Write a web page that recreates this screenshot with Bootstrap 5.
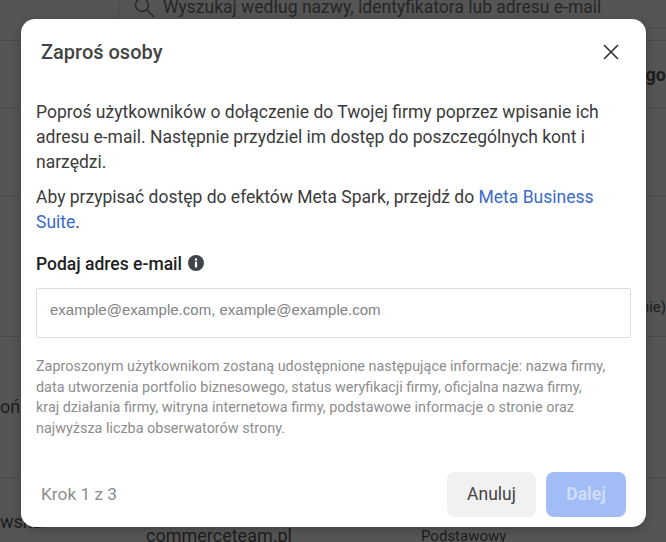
<!DOCTYPE html>
<html lang="pl"><head><meta charset="utf-8"><title>Zaproś osoby</title>
<link href="https://cdn.jsdelivr.net/npm/bootstrap@5.3.0/dist/css/bootstrap.min.css" rel="stylesheet">
<style>
html,body{height:542px;overflow:hidden}
body{background:#555;font-family:Roboto,sans-serif;color:#1c1e21;position:relative}
.bg-top{height:40px}
.bg-search{margin-left:118px;height:29px;border-left:1px solid #4a4a4a;border-bottom:1px solid #4a4a4a;padding-left:13px;gap:7px;font-size:17.5px;color:#262626;line-height:20px;align-items:flex-start;overflow:hidden}
.bg-search svg{margin-top:-3px;flex:none}
.bg-search span{margin-top:-3px}
.bg-row{border-top:1px solid #4a4a4a;font-size:18px;color:#1d1d1d}
.r1{height:68px;text-align:right;font-weight:700;padding-top:20px}
.r2{height:87px}.r3{height:141px;text-align:right;padding-top:100px;font-size:15px}
.r4{height:141px;padding-top:56px}
.r5{height:65px}
.cell-a{width:146px;padding-top:30px}.cell-b{width:275px;padding-top:44px}
.cell-c{font-size:15px;padding-top:47px}
.invite{position:absolute;left:21px;top:19px;width:625px;height:508px;background:#fff;border-radius:14px;box-shadow:0 2px 10px rgba(0,0,0,.25);display:flex;flex-direction:column;color:#444950}
.invite-head{height:67px;padding:21px 25px 0 20px}
.invite-title{font-size:20px;font-weight:500;line-height:24px;color:#444;margin:0}
.close-x{width:20px;height:20px;padding:0;border:0;background:none;margin-top:2px;line-height:0}
.invite-body{padding:14px 15px 0}
.para{font-size:17.5px;line-height:25px;color:#3b3b3b;margin:0 0 10px}
.para a{color:#3a6bc9;text-decoration:none}
.email-lab{font-size:17.5px;font-weight:500;line-height:24px;color:#222;margin:17px 0 12px;display:flex;align-items:center;gap:6px}
.email-lab svg{margin-top:-2px}
.email-box{height:50px;border:1px solid #ddd;border-radius:2px;padding:0 13px;font-family:"Liberation Sans",sans-serif;font-size:15px;line-height:42px;color:#818181}
.note{font-size:14.4px;line-height:20.6px;color:#8d8d8d;margin:19px 0 0;max-width:572px}
.invite-foot{margin-top:auto;padding:0 20px 10px 20px;height:55px}
.step{font-size:17.3px;color:#8e8e8e}
.btn-cancel{width:89px;height:45px;background:#f1f1f1;border:0;border-radius:8px;font-size:17.5px;color:#444;padding:0}
.btn-next:disabled{width:80px;height:45px;background:#a2bdf6;border:0;border-radius:8px;font-size:17.5px;font-weight:700;color:#cfdcfa;padding:0;opacity:1}
.btn-gap{gap:10px}
</style></head><body>
<div class="bg-top"><div class="bg-search d-flex">
<svg width="24" height="24" viewBox="0 0 24 24" fill="none" stroke="#262626" stroke-width="1.4"><circle cx="10" cy="8" r="6.5"/><path d="M15 13l7 7"/></svg>
<span>Wyszukaj według nazwy, identyfikatora lub adresu e-mail</span></div></div>
<div class="bg-row r1">go</div>
<div class="bg-row r2"></div>
<div class="bg-row r3">nie)</div>
<div class="bg-row r4">oń</div>
<div class="bg-row r5 d-flex"><span class="cell-a">wska</span><span class="cell-b">commerceteam.pl</span><span class="cell-c">Podstawowy</span></div>

<div class="invite" role="dialog">
<div class="invite-head d-flex justify-content-between align-items-start">
<h1 class="invite-title">Zaproś osoby</h1>
<button class="close-x" aria-label="Zamknij"><svg width="20" height="20" viewBox="0 0 20 20" fill="none" stroke="#333" stroke-width="1.6"><path d="M3 3l14 14M17 3L3 17"/></svg></button>
</div>
<div class="invite-body">
<p class="para">Poproś użytkowników o dołączenie do Twojej firmy poprzez wpisanie ich adresu e-mail. Następnie przydziel im dostęp do poszczególnych kont i narzędzi.</p>
<p class="para">Aby przypisać dostęp do efektów Meta Spark, przejdź do <a href="#">Meta Business Suite</a>.</p>
<div class="email-lab">Podaj adres e-mail <svg width="16" height="16" viewBox="0 0 16 16"><circle cx="8" cy="8" r="8" fill="#3f444b"/><rect x="6.9" y="6.8" width="2.2" height="5.6" fill="#fff"/><rect x="6.9" y="3.4" width="2.2" height="2.2" fill="#fff"/></svg></div>
<div class="email-box">example@example.com, example@example.com</div>
<p class="note">Zaproszonym użytkownikom zostaną udostępnione następujące informacje: nazwa firmy, data utworzenia portfolio biznesowego, status weryfikacji firmy, oficjalna nazwa firmy, kraj działania firmy, witryna internetowa firmy, podstawowe informacje o stronie oraz najwyższa liczba obserwatorów strony.</p>
</div>
<div class="invite-foot d-flex justify-content-between align-items-center">
<span class="step">Krok 1 z 3</span>
<div class="d-flex btn-gap"><button class="btn btn-cancel">Anuluj</button><button class="btn btn-next" disabled>Dalej</button></div>
</div>
</div>
<script src="https://cdn.jsdelivr.net/npm/bootstrap@5.3.0/dist/js/bootstrap.bundle.min.js"></script>
</body></html>
